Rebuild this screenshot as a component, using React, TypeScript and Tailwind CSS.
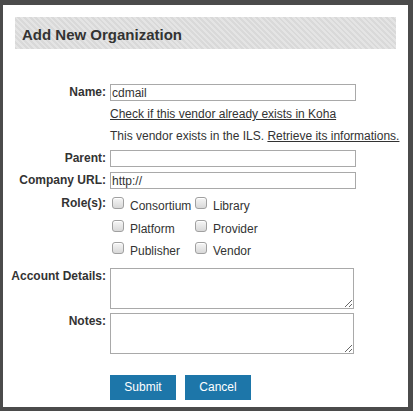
import React from "react";

function Box() {
  return (
    <span className="mt-[2px] ml-[2px] w-[12px] h-[12px] shrink-0 rounded-[3px] border border-[#a0a0a0] bg-linear-to-b from-[#f6f6f6] to-[#d8d8d8] shadow-[inset_0_1px_0_#ffffff]" />
  );
}

function Role({ label }: { label: string }) {
  return (
    <div className="flex items-start h-[22.5px]">
      <Box />
      <span className="ml-[6px] leading-[22.5px]">{label}</span>
    </div>
  );
}

export default function App() {
  return (
    <div className="w-[413px] h-[411px] bg-[#4b4b4b] pt-[5px] pl-[3px] pr-[5px] pb-[4px] font-['Liberation_Sans',Arial,sans-serif]">
      <div className="bg-white h-full pt-[12px]">
        <div className="mx-[12px] h-[32px] pl-[7px] pt-[9px] leading-[17px] text-[15px] font-bold text-[#333] bg-[repeating-linear-gradient(45deg,#d9d9d9_0px,#d9d9d9_2px,#e4e4e4_2px,#e4e4e4_4px)]">
          Add New Organization
        </div>
        <form className="mt-[35px] text-[12px] text-[#333]">
          <div className="flex items-start gap-[4px]">
            <label className="w-[103px] text-right font-bold leading-[17px]">Name:</label>
            <input
              className="w-[246px] h-[17px] border border-[#a9a9a9] pl-[1px] leading-[15px] text-[12px] text-[#333] outline-none"
              defaultValue="cdmail"
            />
          </div>
          <div className="pl-[107px] mt-[3px] leading-[20px]">
            <a href="#" className="underline text-[#333]">Check if this vendor already exists in Koha</a>
          </div>
          <div className="pl-[107px] mt-[2px] leading-[21px]">
            This vendor exists in the ILS. <a href="#" className="underline text-[#333]">Retrieve its informations.</a>
          </div>
          <div className="flex items-start gap-[4px] mt-[3px]">
            <label className="w-[103px] text-right font-bold leading-[17px]">Parent:</label>
            <input className="w-[246px] h-[17px] border border-[#a9a9a9] pl-[1px] text-[12px] outline-none" />
          </div>
          <div className="flex items-start gap-[4px] mt-[5px]">
            <label className="w-[103px] text-right font-bold leading-[17px]">Company URL:</label>
            <input
              className="w-[246px] h-[17px] border border-[#a9a9a9] pl-[1px] text-[12px] text-[#333] outline-none"
              defaultValue="http://"
            />
          </div>
          <div className="flex items-start gap-[4px] mt-[6px]">
            <label className="w-[103px] text-right font-bold leading-[17px]">Role(s):</label>
            <div className="grid grid-cols-[83px_auto]">
              <Role label="Consortium" />
              <Role label="Library" />
              <Role label="Platform" />
              <Role label="Provider" />
              <Role label="Publisher" />
              <Role label="Vendor" />
            </div>
          </div>
          <div className="flex items-start gap-[4px] mt-[5px]">
            <label className="w-[103px] text-right font-bold leading-[17px]">Account Details:</label>
            <textarea className="w-[244px] h-[41px] border border-[#a9a9a9] text-[12px] outline-none resize" />
          </div>
          <div className="flex items-start gap-[4px] mt-[4px]">
            <label className="w-[103px] text-right font-bold leading-[17px]">Notes:</label>
            <textarea className="w-[244px] h-[41px] border border-[#a9a9a9] text-[12px] outline-none resize" />
          </div>
          <div className="flex gap-[9px] pl-[107px] mt-[21px]">
            <button type="button" className="w-[66px] h-[25px] bg-[#1d76a9] text-white text-[12px]">Submit</button>
            <button type="button" className="w-[66px] h-[25px] bg-[#1d76a9] text-white text-[12px]">Cancel</button>
          </div>
        </form>
      </div>
    </div>
  );
}
